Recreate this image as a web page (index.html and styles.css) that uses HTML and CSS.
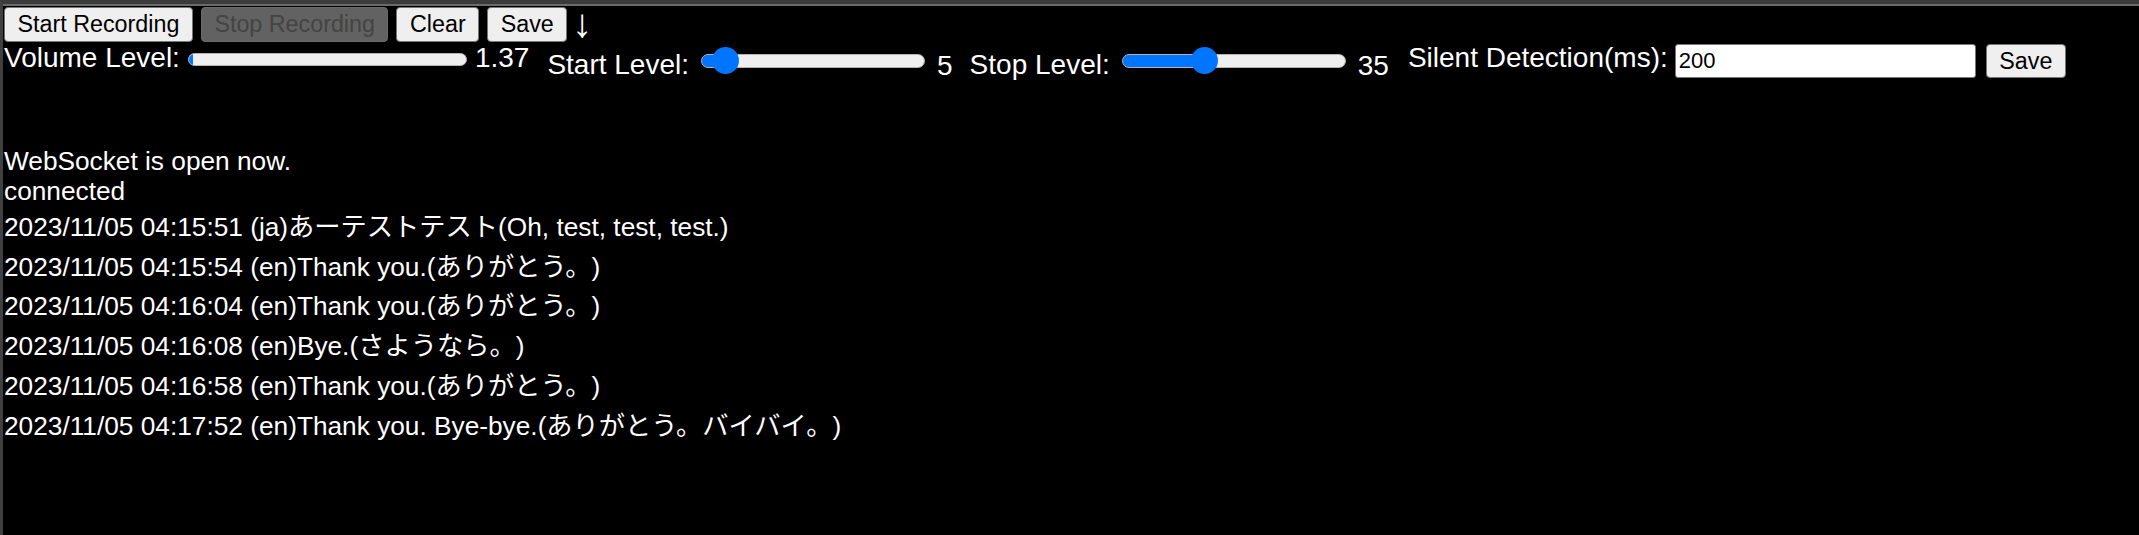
FILE: index.html
```html
<!DOCTYPE html>
<html lang="ja">
<head>
<meta charset="utf-8">
<title>Recorder</title>
<link rel="stylesheet" href="styles.css">
</head>
<body>
<div class="window">
  <div class="toolbar">
    <button class="btn">Start Recording</button>
    <button class="btn" disabled>Stop Recording</button>
    <button class="btn">Clear</button>
    <button class="btn">Save</button>
    <span class="arrow">↓</span>
  </div>
  <div class="controls">
    <span class="label label-volume">Volume Level:</span>
    <div class="meter"><div class="meter-fill" style="width:1.37%"></div></div>
    <span class="label value-volume">1.37</span>
    <span class="label label-start">Start Level:</span>
    <input type="range" class="slider slider-start" min="0" max="100" value="5" style="--v:0.05">
    <span class="label value-level value-start">5</span>
    <span class="label label-stop">Stop Level:</span>
    <input type="range" class="slider slider-stop" min="0" max="100" value="35" style="--v:0.35">
    <span class="label value-level value-stop">35</span>
    <span class="label label-silent">Silent Detection(ms):</span>
    <input type="text" class="text-input" value="200">
    <button class="btn btn-save2">Save</button>
  </div>
  <div class="log">
    <div class="line">WebSocket is open now.</div>
    <div class="line">connected</div>
    <div class="entries">
      <div class="entry">2023/11/05 04:15:51 (ja)あーテストテスト(Oh, test, test, test.)</div>
      <div class="entry">2023/11/05 04:15:54 (en)Thank you.(ありがとう。)</div>
      <div class="entry">2023/11/05 04:16:04 (en)Thank you.(ありがとう。)</div>
      <div class="entry">2023/11/05 04:16:08 (en)Bye.(さようなら。)</div>
      <div class="entry">2023/11/05 04:16:58 (en)Thank you.(ありがとう。)</div>
      <div class="entry">2023/11/05 04:17:52 (en)Thank you. Bye-bye.(ありがとう。バイバイ。)</div>
    </div>
  </div>
</div>
</body>
</html>
```

FILE: styles.css
```css
html, body {
  margin: 0;
  padding: 0;
  background: #000;
}

body {
  border-top: 4px solid #3b3b3b;
  border-left: 3px solid #404040;
  min-height: 100vh;
  box-sizing: border-box;
  color: #fff;
  font-family: "Liberation Sans", Arial, "Noto Sans CJK JP", sans-serif;
}

.window {
  border-top: 2px solid #6a6a6a;
  padding-left: 1px;
}

/* ---------- toolbar ---------- */
.toolbar {
  display: flex;
  align-items: flex-start;
  gap: 8px;
  margin-top: 1px;
  height: 35px;
}

.btn {
  box-sizing: border-box;
  height: 35px;
  padding: 0 12.5px;
  border: 1px solid #767676;
  border-radius: 4px;
  background: #efefef;
  color: #000;
  font-family: "Liberation Sans", Arial, sans-serif;
  font-size: 23.3px;
  line-height: 33px;
  white-space: nowrap;
}

.btn:disabled {
  background: #626262;
  color: #444;
  border-color: #6a6a6a;
}

.arrow {
  font-family: "Liberation Sans", "DejaVu Sans", sans-serif;
  font-size: 40px;
  line-height: 40px;
  margin-top: -4px;
  margin-left: -3px;
}

/* ---------- controls ---------- */
.controls {
  display: flex;
  align-items: flex-start;
  height: 36px;
}

.label {
  font-size: 28px;
  line-height: 32px;
  white-space: nowrap;
}

.label-volume { margin-top: 0; }

.meter {
  width: 279px;
  height: 13px;
  margin: 11px 0 0 8px;
  box-sizing: border-box;
  border: 1px solid #b2b2b2;
  border-radius: 7px;
  background: #efefef;
  overflow: hidden;
}

.meter-fill {
  height: 100%;
  background: #0075ff;
}

.value-volume { margin-left: 8px; }

.label-start { margin: 7px 0 0 18px; }
.label-stop  { margin: 7px 0 0 17px; }

.slider {
  -webkit-appearance: none;
  appearance: none;
  --pos: calc(13.5px + var(--v) * 197px);
  width: 224px;
  height: 27px;
  margin: 5px 0 0 12px;
  padding: 0;
  background: transparent;
}

.slider-stop { margin-left: 12px; }

.slider::-webkit-slider-runnable-track {
  height: 14px;
  box-sizing: border-box;
  border-radius: 7px;
  border: 1px solid #b2b2b2;
  background: linear-gradient(to right, #0075ff 0, #0075ff var(--pos), #efefef var(--pos));
}

.slider::-webkit-slider-thumb {
  -webkit-appearance: none;
  appearance: none;
  width: 27px;
  height: 27px;
  margin-top: -7.5px;
  border: none;
  border-radius: 50%;
  background: #0075ff;
}

.value-level { margin: 8px 0 0 12px; }

.label-silent { margin-left: 19px; }

.text-input {
  box-sizing: border-box;
  width: 301px;
  height: 34px;
  margin: 2px 0 0 7px;
  padding: 0 3px;
  border: 1px solid #767676;
  border-radius: 3px;
  background: #fff;
  color: #000;
  font-family: "Liberation Sans", Arial, sans-serif;
  font-size: 22px;
}

.btn-save2 {
  height: 34px;
  margin: 2px 0 0 10px;
}

/* ---------- log ---------- */
.log {
  margin-top: 68px;
  font-size: 26.25px;
  font-family: "Liberation Sans", Arial, "Noto Sans CJK JP", sans-serif;
  text-spacing-trim: space-all;
}

.line {
  line-height: 30px;
}

.entries {
  padding-top: 2px;
}

.entry {
  line-height: 39.7px;
}
```
